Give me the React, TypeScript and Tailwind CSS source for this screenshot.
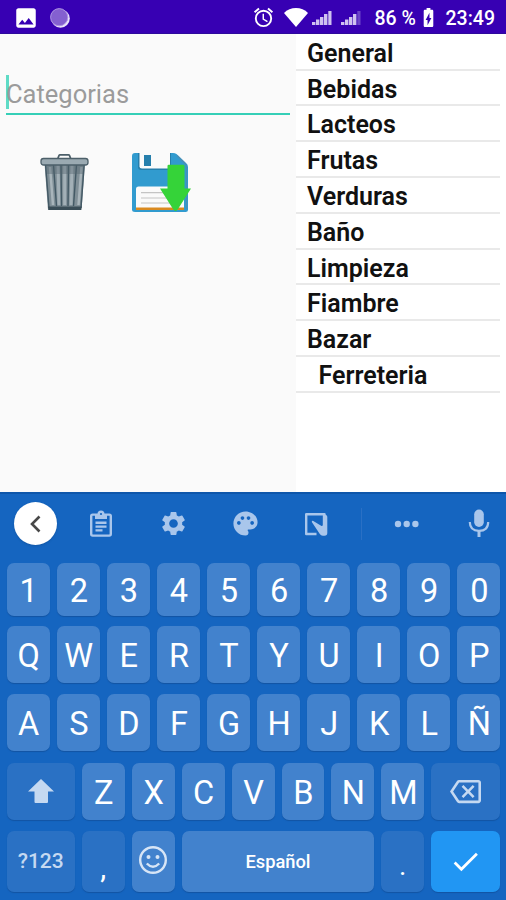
import type { ReactNode } from "react";
import {
  MdBatteryChargingFull,
  MdCheck,
  MdImage,
  MdOutlineAlarm,
  MdOutlineBackspace,
  MdPalette,
  MdSettings,
} from "react-icons/md";

const categories = [
  "General",
  "Bebidas",
  "Lacteos",
  "Frutas",
  "Verduras",
  "Baño",
  "Limpieza",
  "Fiambre",
  "Bazar",
  "Ferreteria",
];

const SignalBars = ({ weak = false }: { weak?: boolean }) => (
  <svg viewBox="0 0 20 16" className="w-5 h-4" fill="#cfc2f0">
    <rect x="0" y="12" width="3.400" height="3" />
    <rect x="4" y="9.500" width="3.400" height="5.500" />
    <rect x="8" y="7" width="3.400" height="8" />
    <rect x="12" y="4" width="3.400" height="11" />
    <rect x="16.300" y="1" width="3.200" height="14" opacity={weak ? 0.35 : 1} />
  </svg>
);

const StatusBar = () => (
  <header className="h-[34px] shrink-0 bg-[#3700b3] border-b border-[#2d0a9c] flex items-center text-white">
    <MdImage className="ml-[13px] mt-0.5 w-[26px] h-[26px]" />
    <svg viewBox="0 0 20 20" className="ml-[10.500px] mt-0.5 w-5 h-5">
      <circle cx="10.500" cy="10.500" r="9.300" fill="#e9e2fa" />
      <circle cx="9.200" cy="9.200" r="8.600" fill="#8460d0" stroke="#ad94e2" strokeWidth="1" />
    </svg>
    <MdOutlineAlarm className="ml-[182px] mt-0.5 w-[23px] h-[23px]" />
    <svg viewBox="0 0 24 19" className="ml-[9px] mt-0.5 w-6 h-[19px]" fill="#fff">
      <path d="M0 5C3 1.500 7.500 0 12 0s9 1.500 12 5L12 19z" />
    </svg>
    <div className="ml-[4px] mt-0.5 flex gap-[9px]">
      <SignalBars />
      <SignalBars weak />
    </div>
    <span className="ml-[14px] mt-1 w-[43px] text-[19.500px] leading-6 font-medium whitespace-nowrap">86 %</span>
    <MdBatteryChargingFull className="-ml-px mt-0.5 w-[23px] h-[23px]" />
    <span className="ml-[6px] mt-1 text-[19.500px] leading-6 font-medium">23:49</span>
  </header>
);

const TrashIcon = () => (
  <svg viewBox="0 0 50 58" className="w-[50px] h-[58px]">
    <path d="M17.500 6.500l1.500-4q.3-.7 1-.7h8.500q.7 0 1 .7l1.500 4" fill="none" stroke="#4c5f69" strokeWidth="1.800" />
    <path d="M4.500 10h40.500l-3.500 47H8z" fill="#7f8e96" />
    <path d="M10 14l3 38M38.500 52l3-38" stroke="#a9b5bb" strokeWidth="2.500" />
    <path d="M18 12l1 40M24.700 12v40M32 12l-1 40" stroke="#a3b0b7" strokeWidth="3" />
    <path d="M5.500 11l3.500 44M13.500 12l3 41M21 12l.5 41M28.500 12l-.5 41M36.500 12l-3 41M44.200 11L41 55" stroke="#435965" strokeWidth="1.400" />
    <path d="M6 12h38l-.6 9H7z" fill="#52656f" opacity=".4" />
    <path d="M8 53.500h33.500L41 57H8.500z" fill="#3a4d57" />
    <rect x="1" y="5.500" width="47" height="6.500" rx="2.500" fill="#9baab2" stroke="#4c5f69" strokeWidth="1.300" />
  </svg>
);

const SaveIcon = () => (
  <svg viewBox="0 0 60 60" className="w-[60px] h-[60px]">
    <path d="M3 0h38q2 0 3.500 1L54 10q2 1.500 2 4v42.500q0 2.500-2.500 2.500H3q-3 0-3-2.500V3q0-3 3-3z" fill="#319bcf" />
    <path d="M45 2.500l8 8q1.500 1.500 1.500 4V56" fill="none" stroke="#4b8fb5" strokeWidth="1.300" />
    <path d="M6 0h33v15q0 2-2 2H9q-3 0-3-3z" fill="#267fac" />
    <path d="M7.500 0h30.500v13.500q0 2-2 2H10q-2.500 0-2.500-2z" fill="#fafafa" />
    <rect x="12" y="2" width="7" height="11" fill="#267fac" />
    <path d="M4 56V36q0-2.500 2.500-2.500h43Q52 33.500 52 36v20z" fill="#fafafa" />
    <path d="M9 39.700h32M9 45h32M9 50h32" stroke="#c4c4c4" strokeWidth="1.200" />
    <path d="M4 54.500h48v2.500H4z" fill="#d98a20" />
    <path d="M35.500 13q0-1.200 1.200-1.200h14.600q1.200 0 1.200 1.200v22.500h6.500L46 56q-2.500 4-5 0L28 35.500h7.500z" fill="#35d339" />
  </svg>
);

const ClipboardIcon = () => (
  <svg viewBox="0 0 24 28" className="w-6 h-7" fill="none" stroke="#a9c6eb" strokeWidth="2.400">
    <rect x="2.200" y="4.600" width="19.600" height="21" rx="1.500" />
    <path d="M6 4h12v5H6zM8.500 4q0-3.500 3.500-3.500T15.500 4" fill="#a9c6eb" stroke="none" />
    <circle cx="12" cy="4" r="1.100" fill="#1565c0" stroke="none" />
    <path d="M6.500 12.800h11M6.500 16.600h11M6.500 20.400h7" />
  </svg>
);

const HandwriteIcon = () => (
  <svg viewBox="0 0 24 26" className="w-6 h-[26px]" fill="none" stroke="#a9c6eb" strokeWidth="2.400">
    <path d="M12.500 23H2.200V3.200H20.500V15" strokeLinejoin="round" />
    <path d="M7.800 11q0-1.600 1.500-1l8.200 5q1.300.2 1.300-1.200V3.500q4.500-.5 4.500 2.500V22q0 2.800-2.800 2.800h-1.700q-2 0-3-1.800z" fill="#a9c6eb" stroke="none" />
  </svg>
);

const MicIcon = () => (
  <svg viewBox="0 0 22 28" className="w-[22px] h-7" fill="none" stroke="#a9c6eb" strokeWidth="2.200">
    <rect x="6.200" y="0.500" width="9.600" height="17.500" rx="4.800" fill="#a9c6eb" stroke="none" />
    <path d="M1.800 13q0 8.800 9.200 8.800T20.200 13" />
    <path d="M11 21.500V28" strokeWidth="3" />
  </svg>
);

const Toolbar = () => (
  <div className="h-[59px] pl-[14px] flex items-center text-[#a9c6eb]">
    <div className="w-[43px] h-[43px] rounded-full bg-white flex items-center justify-center shadow-sm">
      <svg viewBox="0 0 12 18" className="w-3 h-[18px] mr-0.5" fill="none" stroke="#484848" strokeWidth="2.600">
        <path d="M10.500 1.500L3 9l7.500 7.500" />
      </svg>
    </div>
    <div className="ml-[32px]"><ClipboardIcon /></div>
    <MdSettings className="ml-[45.500px] w-[29px] h-[29px]" />
    <MdPalette className="ml-[43px] w-[29px] h-[29px]" />
    <div className="ml-[44.500px]"><HandwriteIcon /></div>
    <div className="ml-[33px] w-px h-8 bg-[#2a70c5]" />
    <svg viewBox="0 0 26 8" className="ml-[32px] w-[26px] h-2" fill="currentColor">
      <circle cx="4" cy="4" r="3.200" />
      <circle cx="12.700" cy="4" r="3.200" />
      <circle cx="21.400" cy="4" r="3.200" />
    </svg>
    <div className="ml-[47.500px] -mt-0.5"><MicIcon /></div>
  </div>
);

type KeyProps = {
  children: ReactNode;
  className?: string;
};

const keyBase =
  "flex items-center justify-center rounded-[7px] shadow-[0_1px_1px_#1254a3] text-white";

const LetterKey = ({ children, className = "flex-1" }: KeyProps) => (
  <div className={`${keyBase} bg-[#4282cd] text-[32.500px] leading-none ${className}`}>
    <span className="mt-[3.500px] ml-px">{children}</span>
  </div>
);

const ActionKey = ({ children, className = "" }: KeyProps) => (
  <div className={`${keyBase} bg-[#2a71c4] ${className}`}>{children}</div>
);

const Keyboard = () => (
  <section className="h-[408px] shrink-0 bg-[#1565c0] border-t-2 border-[#0e56aa]">
    <Toolbar />
    <div className="mt-[9.500px] pl-[6.700px] pr-[5.700px] flex flex-col">
      <div className="flex gap-[7px] h-[53.500px]">
        {[..."1234567890"].map((k) => <LetterKey key={k}>{k}</LetterKey>)}
      </div>
      <div className="mt-[10px] flex gap-[7px] h-[57px]">
        {[..."QWERTYUIOP"].map((k) => <LetterKey key={k}>{k}</LetterKey>)}
      </div>
      <div className="mt-[11px] flex gap-[7px] h-[57px]">
        {[..."ASDFGHJKLÑ"].map((k) => <LetterKey key={k}>{k}</LetterKey>)}
      </div>
      <div className="mt-[11.500px] flex gap-[7px] h-[57px]">
        <ActionKey className="w-[68px]">
          <svg viewBox="0 0 26 24" className="w-[26px] h-6" fill="#c5d9f1">
            <path d="M13 0l13 12.500h-6V23q0 1-1 1H7.500q-1 0-1-1V12.500H0z" />
          </svg>
        </ActionKey>
        {[..."ZXCVBNM"].map((k) => <LetterKey key={k}>{k}</LetterKey>)}
        <ActionKey className="w-[69px]">
          <MdOutlineBackspace className="w-[31px] h-[31px] text-[#c5d9f1]" />
        </ActionKey>
      </div>
      <div className="mt-[11.500px] flex gap-[7px] h-[61px]">
        <ActionKey className="w-[68px]">
          <span className="mt-px text-[21px] font-medium text-[#c5d9f1]">?123</span>
        </ActionKey>
        <ActionKey className="w-[43px] text-[30px]">
          <span className="mt-3">,</span>
        </ActionKey>
        <LetterKey className="w-[43px]">
          <svg viewBox="0 0 30 30" className="w-[30px] h-[30px] -ml-0.5 -mt-1.5" fill="none" stroke="#d7e5f6" strokeWidth="2.400">
            <circle cx="15" cy="15" r="12.800" />
            <path d="M8.800 18.500q6.200 6.500 12.400 0" />
            <circle cx="10.500" cy="12" r="2" fill="#d7e5f6" stroke="none" />
            <circle cx="19.500" cy="12" r="2" fill="#d7e5f6" stroke="none" />
          </svg>
        </LetterKey>
        <div className={`${keyBase} flex-1 bg-[#4282cd] text-[18.300px] font-medium text-[#dfeaf8]`}>
          <span className="mt-px">Español</span>
        </div>
        <ActionKey className="w-[43px] text-[28px]">
          <span className="mt-2">.</span>
        </ActionKey>
        <div className={`${keyBase} w-[69px] bg-[#2196f3]`}>
          <MdCheck className="w-[33px] h-[33px]" />
        </div>
      </div>
    </div>
  </section>
);

export default function App() {
  return (
    <div className="w-[506px] h-[900px] overflow-hidden flex flex-col font-['Roboto',sans-serif]">
      <StatusBar />
      <main className="flex-1 min-h-0 flex bg-white">
        <div className="w-[296px] bg-[#fafafa] pl-[6px] pr-[6px] pt-[41px]">
          <div className="h-[40px] border-b-2 border-[#35cfb7] flex">
            <div className="w-[2.500px] h-[34px] bg-[#5fdbc6]" />
            <span className="-ml-[2.500px] mt-px text-[25.500px] leading-9 text-[#9b9b9b]">Categorias</span>
          </div>
          <div className="flex pl-[34px] pt-[38px]">
            <TrashIcon />
            <div className="ml-[42px]"><SaveIcon /></div>
          </div>
        </div>
        <ul className="w-[204px] pt-[0.800px]">
          {categories.map((name) => (
            <li
              key={name}
              className={`h-[35.800px] border-b-2 border-[#e9e9e9] text-[25px] leading-[37px] font-semibold text-[#111] ${
                name === "Ferreteria" ? "pl-[22.500px]" : "pl-[11px]"
              }`}
            >
              {name}
            </li>
          ))}
        </ul>
      </main>
      <Keyboard />
    </div>
  );
}
